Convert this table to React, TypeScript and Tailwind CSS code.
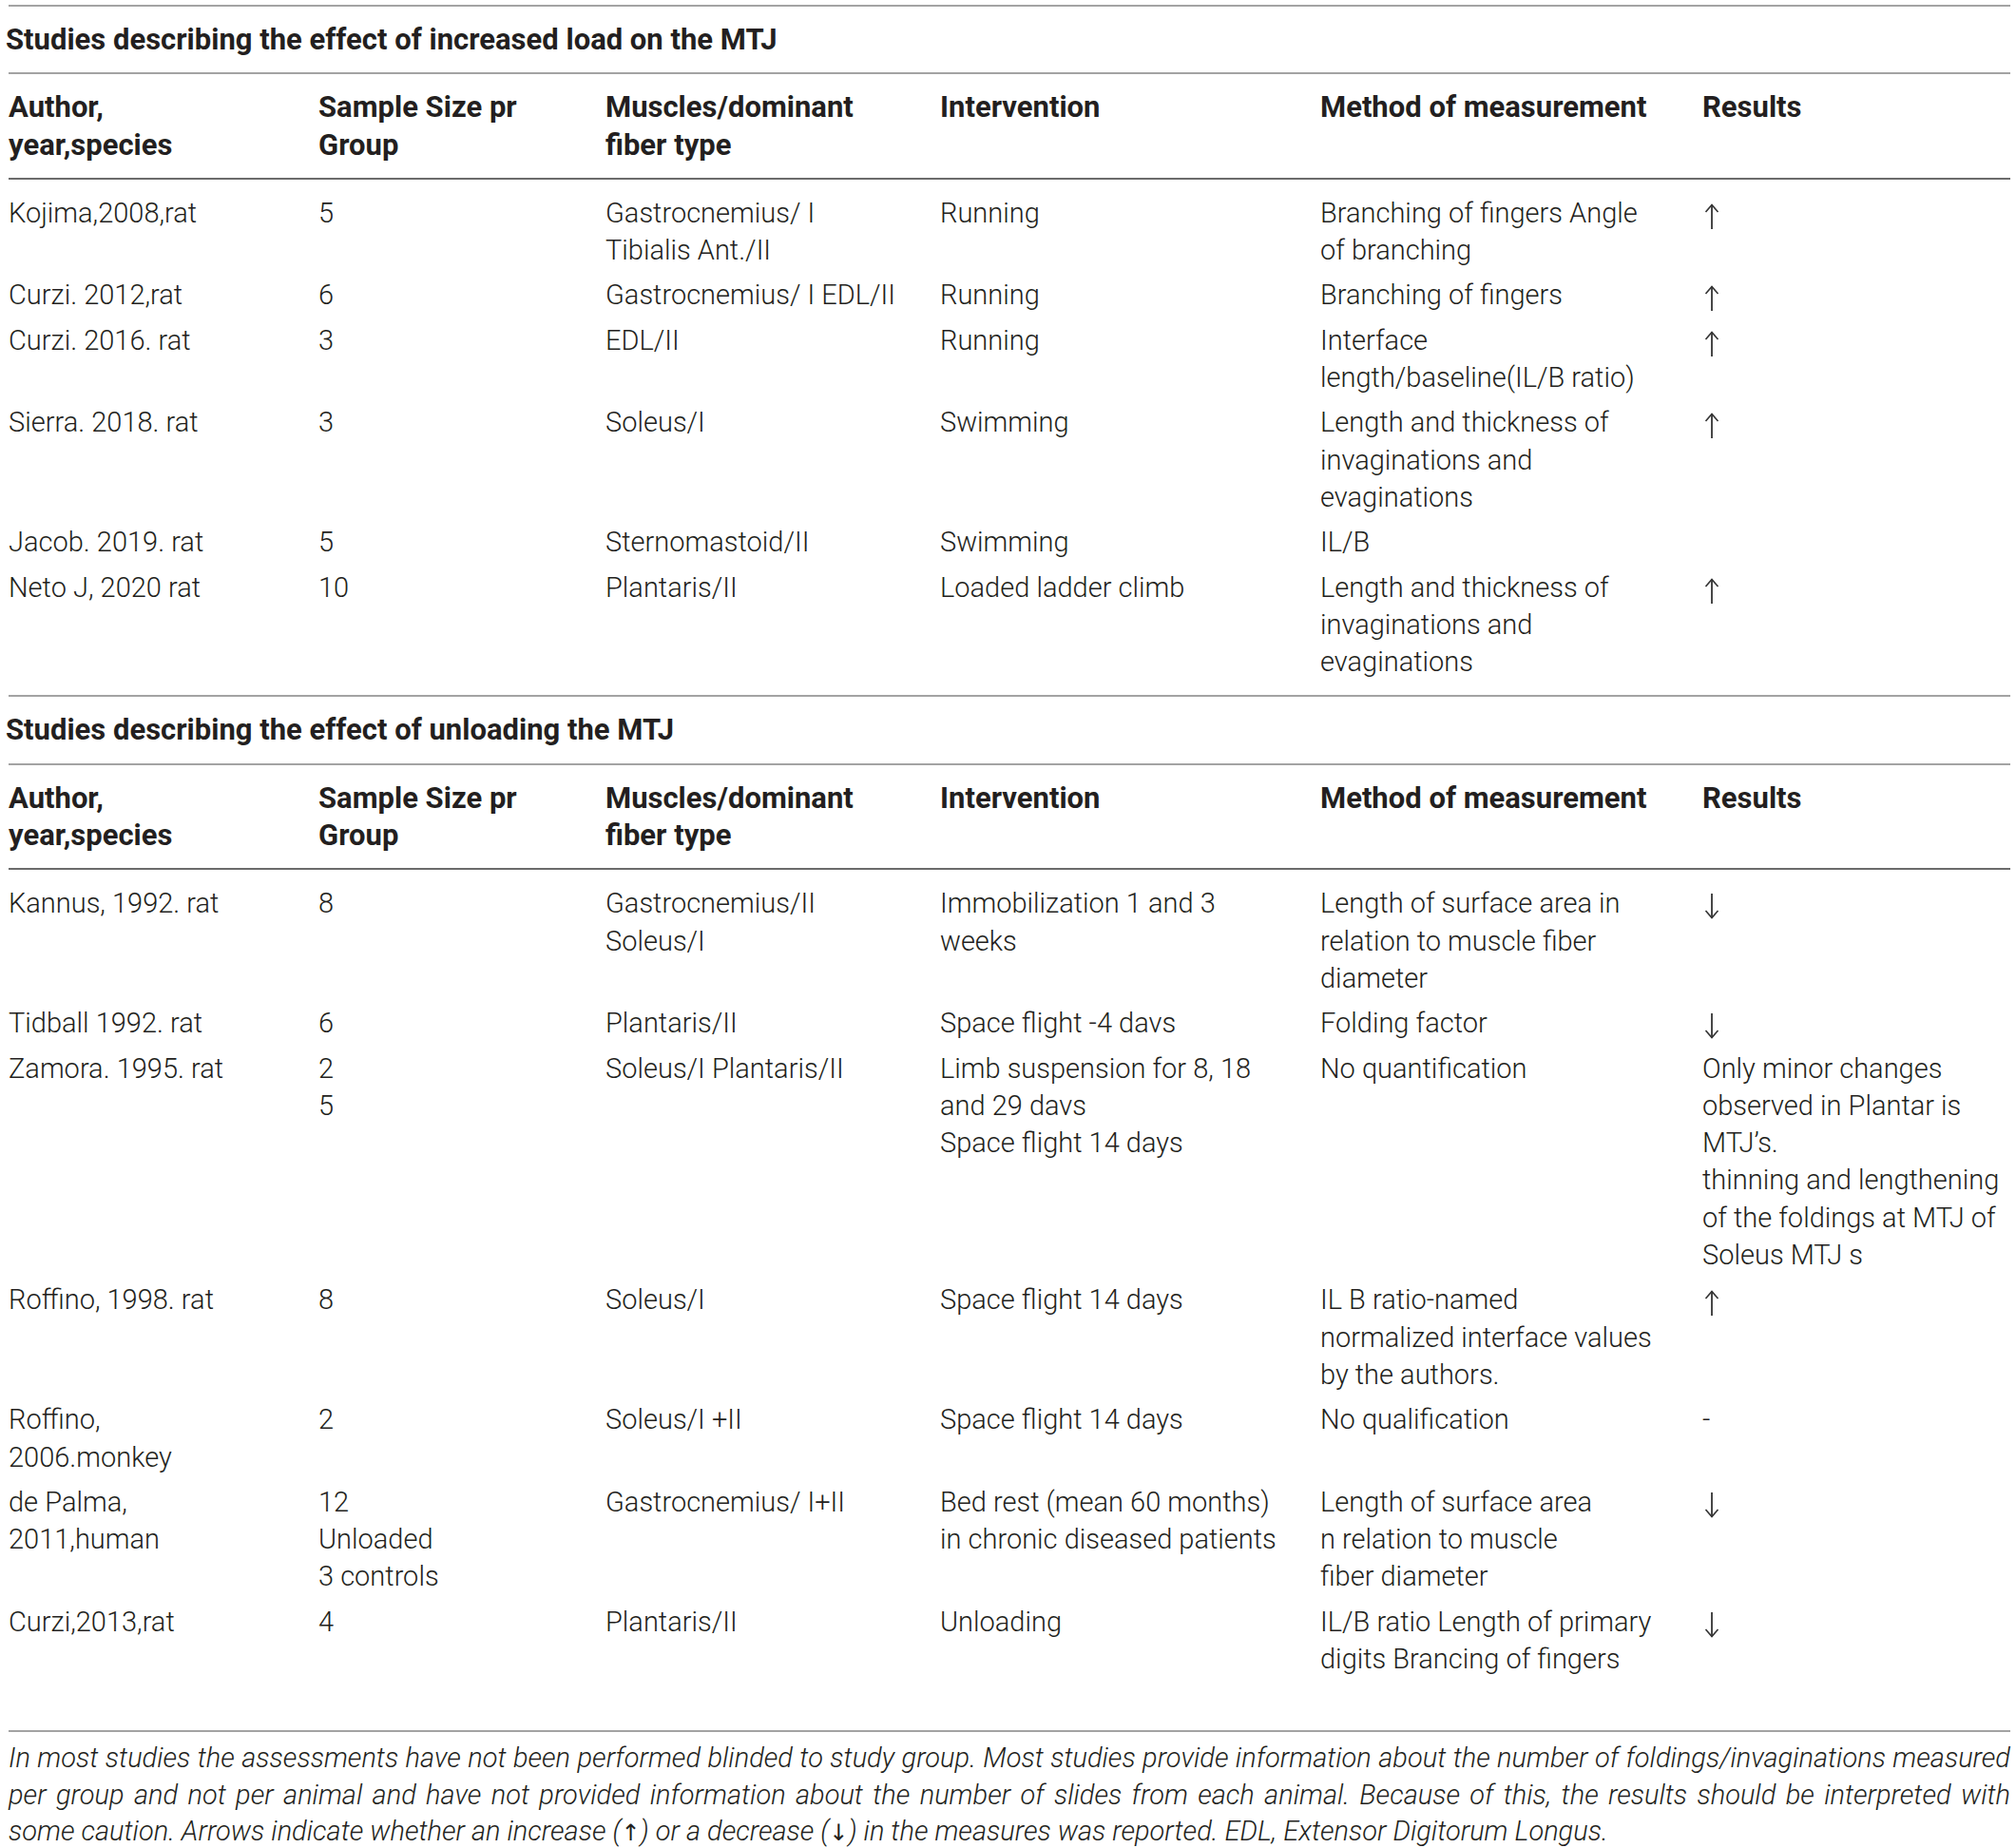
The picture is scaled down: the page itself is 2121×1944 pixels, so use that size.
const headers = [
  ['Author,', 'year,species'],
  ['Sample Size pr', 'Group'],
  ['Muscles/dominant', 'fiber type'],
  ['Intervention'],
  ['Method of measurement'],
  ['Results'],
];

type Row = string[][];

const loadRows: Row[] = [
  [['Kojima,2008,rat'], ['5'], ['Gastrocnemius/ I', 'Tibialis Ant./II'], ['Running'], ['Branching of fingers Angle', 'of branching'], ['↑']],
  [['Curzi. 2012,rat'], ['6'], ['Gastrocnemius/ I EDL/II'], ['Running'], ['Branching of fingers'], ['↑']],
  [['Curzi. 2016. rat'], ['3'], ['EDL/II'], ['Running'], ['Interface', 'length/baseline(IL/B ratio)'], ['↑']],
  [['Sierra. 2018. rat'], ['3'], ['Soleus/I'], ['Swimming'], ['Length and thickness of', 'invaginations and', 'evaginations'], ['↑']],
  [['Jacob. 2019. rat'], ['5'], ['Sternomastoid/II'], ['Swimming'], ['IL/B'], []],
  [['Neto J, 2020 rat'], ['10'], ['Plantaris/II'], ['Loaded ladder climb'], ['Length and thickness of', 'invaginations and', 'evaginations'], ['↑']],
];

const unloadRows: Row[] = [
  [['Kannus, 1992. rat'], ['8'], ['Gastrocnemius/II', 'Soleus/I'], ['Immobilization 1 and 3', 'weeks'], ['Length of surface area in', 'relation to muscle fiber', 'diameter'], ['↓']],
  [['Tidball 1992. rat'], ['6'], ['Plantaris/II'], ['Space flight -4 davs'], ['Folding factor'], ['↓']],
  [
    ['Zamora. 1995. rat'],
    ['2', '5'],
    ['Soleus/I Plantaris/II'],
    ['Limb suspension for 8, 18', 'and 29 davs', 'Space flight 14 days'],
    ['No quantification'],
    ['Only minor changes', 'observed in Plantar is', 'MTJ’s.', 'thinning and lengthening', 'of the foldings at MTJ of', 'Soleus MTJ s'],
  ],
  [['Roffino, 1998. rat'], ['8'], ['Soleus/I'], ['Space flight 14 days'], ['IL B ratio-named', 'normalized interface values', 'by the authors.'], ['↑']],
  [['Roffino,', '2006.monkey'], ['2'], ['Soleus/I +II'], ['Space flight 14 days'], ['No qualification'], ['-']],
  [['de Palma,', '2011,human'], ['12', 'Unloaded', '3 controls'], ['Gastrocnemius/ I+II'], ['Bed rest (mean 60 months)', 'in chronic diseased patients'], ['Length of surface area', 'n relation to muscle', 'fiber diameter'], ['↓']],
  [['Curzi,2013,rat'], ['4'], ['Plantaris/II'], ['Unloading'], ['IL/B ratio Length of primary', 'digits Brancing of fingers'], ['↓']],
];

const cols = 'grid grid-cols-[326px_302px_352px_400px_402px_1fr]';

function Arrow({ down }: { down?: boolean }) {
  return (
    <svg width="16" height="27" viewBox="0 0 16 27" className={`ml-[2px] mt-[9px] ${down ? 'rotate-180' : ''}`}>
      <line x1="8" y1="1.5" x2="8" y2="27" stroke="#333" strokeWidth="1.8" />
      <polyline points="1.5,9 8,1.5 14.5,9" fill="none" stroke="#333" strokeWidth="1.6" />
    </svg>
  );
}

function Lines({ lines }: { lines: string[] }) {
  if (lines[0] === '↑') return <Arrow />;
  if (lines[0] === '↓') return <Arrow down />;
  return (
    <div className="whitespace-nowrap">
      {lines.map((l, i) => (
        <div key={i}>{l}</div>
      ))}
    </div>
  );
}

function Section({ title, rows, last }: { title: string; rows: Row[]; last?: boolean }) {
  return (
    <div>
      <div className="border-t-2 border-[#a3a3a3] ml-[2px] py-[15px]">
        <div className="font-bold text-[31px] -ml-[3px]">{title}</div>
      </div>
      <div className={`${cols} border-t-2 border-[#a3a3a3] ml-[2px] py-[15px] font-bold text-[31px]`}>
        {headers.map((h, i) => (
          <Lines key={i} lines={h} />
        ))}
      </div>
      <div className={`border-t-2 border-[#6b6b6b] ml-[2px] pt-[16px] ${last ? 'pb-[47px]' : 'pb-[7px]'}`}>
        {rows.map((r, i) => (
          <div key={i} className={`${cols} pb-[8px]`}>
            {r.map((c, j) => (
              <Lines key={j} lines={c} />
            ))}
          </div>
        ))}
      </div>
    </div>
  );
}

export default function App() {
  return (
    <div className="min-h-screen bg-white text-[#231f20] font-['Roboto','Liberation_Sans',sans-serif] font-light text-[29px] leading-[39.3px] pl-[7px] pr-[6px] pt-[5px]">
      <Section title="Studies describing the effect of increased load on the MTJ" rows={loadRows} />
      <Section title="Studies describing the effect of unloading the MTJ" rows={unloadRows} last />
      <div className="border-t-2 border-[#a3a3a3] ml-[2px] pt-[8px] italic text-[29px] leading-[38.5px] -ml-[1px]">
        <div className="text-justify [text-align-last:justify] whitespace-nowrap">
          In most studies the assessments have not been performed blinded to study group. Most studies provide information about the number of foldings/invaginations measured
        </div>
        <div className="text-justify [text-align-last:justify] whitespace-nowrap">
          per group and not per animal and have not provided information about the number of slides from each animal. Because of this, the results should be interpreted with
        </div>
        <div className="whitespace-nowrap">
          some caution. Arrows indicate whether an increase (<span className="font-['DejaVu_Sans',sans-serif] not-italic font-normal text-[24px]">↑</span>) or a decrease (<span className="font-['DejaVu_Sans',sans-serif] not-italic font-normal text-[24px]">↓</span>) in the measures was reported. EDL, Extensor Digitorum Longus.
        </div>
      </div>
    </div>
  );
}
